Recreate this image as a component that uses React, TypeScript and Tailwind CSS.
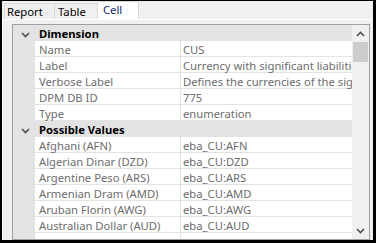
import React from 'react';

type Row = { name: string; value: string };

const dimension: Row[] = [
  { name: 'Name', value: 'CUS' },
  { name: 'Label', value: 'Currency with significant liabilities' },
  { name: 'Verbose Label', value: 'Defines the currencies of the significant liabilities' },
  { name: 'DPM DB ID', value: '775' },
  { name: 'Type', value: 'enumeration' },
];

const possible: Row[] = [
  { name: 'Afghani (AFN)', value: 'eba_CU:AFN' },
  { name: 'Algerian Dinar (DZD)', value: 'eba_CU:DZD' },
  { name: 'Argentine Peso (ARS)', value: 'eba_CU:ARS' },
  { name: 'Armenian Dram (AMD)', value: 'eba_CU:AMD' },
  { name: 'Aruban Florin (AWG)', value: 'eba_CU:AWG' },
  { name: 'Australian Dollar (AUD)', value: 'eba_CU:AUD' },
  { name: '', value: '' },
];

const Chevron = ({ up = false }: { up?: boolean }) => (
  <svg width="9" height="6" viewBox="0 0 9 6" className={up ? 'rotate-180' : ''}>
    <path d="M1 1 L4.5 4.5 L8 1" fill="none" stroke="#505050" strokeWidth="1.6" />
  </svg>
);

const Category = ({ title }: { title: string }) => (
  <div className="flex h-[16px] shrink-0 bg-[#e3e3e3]">
    <div className="flex w-[22px] justify-center pl-[3px] pt-[7px]">
      <Chevron />
    </div>
    <span className="pl-[4px] pt-[2px] font-bold leading-[14px] text-black">{title}</span>
  </div>
);

const Item = ({ row }: { row: Row }) => (
  <div className="flex h-[16px] shrink-0 bg-[#e3e3e3]">
    <div className="w-[22px] shrink-0" />
    <div className="w-[145px] shrink-0 overflow-x-clip whitespace-nowrap border-b border-[#e3e3e3] bg-white pl-[4px] pt-[2px] leading-[14px] text-[#6d6d6d]">
      {row.name}
    </div>
    <div className="ml-px flex-1 overflow-x-clip whitespace-nowrap border-b border-[#e3e3e3] bg-white pl-[2px] pt-[2px] leading-[14px] text-[#6d6d6d]">
      {row.value}
    </div>
  </div>
);

export default function App() {
  return (
    <div
      className="flex h-[243px] w-[376px] flex-col overflow-hidden border-t border-b-[3px] border-l-[2px] border-r-[3px] border-black bg-[#f0f0f0] text-[11.25px]"
      style={{ fontFamily: '"Noto Sans", sans-serif' }}
    >
      {/* tab strip */}
      <div className="flex h-[18px] shrink-0 items-end pl-[2px]">
        <div className="flex h-[16px] w-[51px] items-center border border-b-0 border-[#d9d9d9] bg-[#f0f0f0] pl-[2px] pt-[1px] leading-none">
          Report
        </div>
        <div className="flex h-[16px] w-[43px] items-center border border-b-0 border-l-0 border-[#d9d9d9] bg-[#f0f0f0] pl-[3px] pt-[1px] leading-none">
          Table
        </div>
        <div className="-mb-px flex h-[19px] w-[41px] items-start border border-b-0 border-l-0 border-[#d9d9d9] bg-white pl-[5px] pt-[2px] leading-none text-[#0a2a6a]">
          Cell
        </div>
      </div>

      {/* tab page */}
      <div className="flex min-h-0 flex-1 flex-col border-l border-t border-white pl-[9px] pr-[3px] pt-[4px]">
        <div className="flex min-h-0 flex-1 border border-[#a0a0a0] bg-[#e3e3e3]">
          <div className="flex min-w-0 flex-1 flex-col overflow-hidden">
            <Category title="Dimension" />
            {dimension.map((r) => (
              <Item key={r.name} row={r} />
            ))}
            <Category title="Possible Values" />
            {possible.map((r, i) => (
              <Item key={i} row={r} />
            ))}
          </div>
          {/* scrollbar */}
          <div className="flex w-[17px] shrink-0 flex-col bg-[#f0f0f0]">
            <div className="flex h-[17px] items-center justify-center">
              <Chevron up />
            </div>
            <div className="mx-px h-[20px] bg-[#cdcdcd]" />
            <div className="flex-1" />
            <div className="flex h-[17px] items-center justify-center">
              <Chevron />
            </div>
          </div>
        </div>
      </div>
    </div>
  );
}
